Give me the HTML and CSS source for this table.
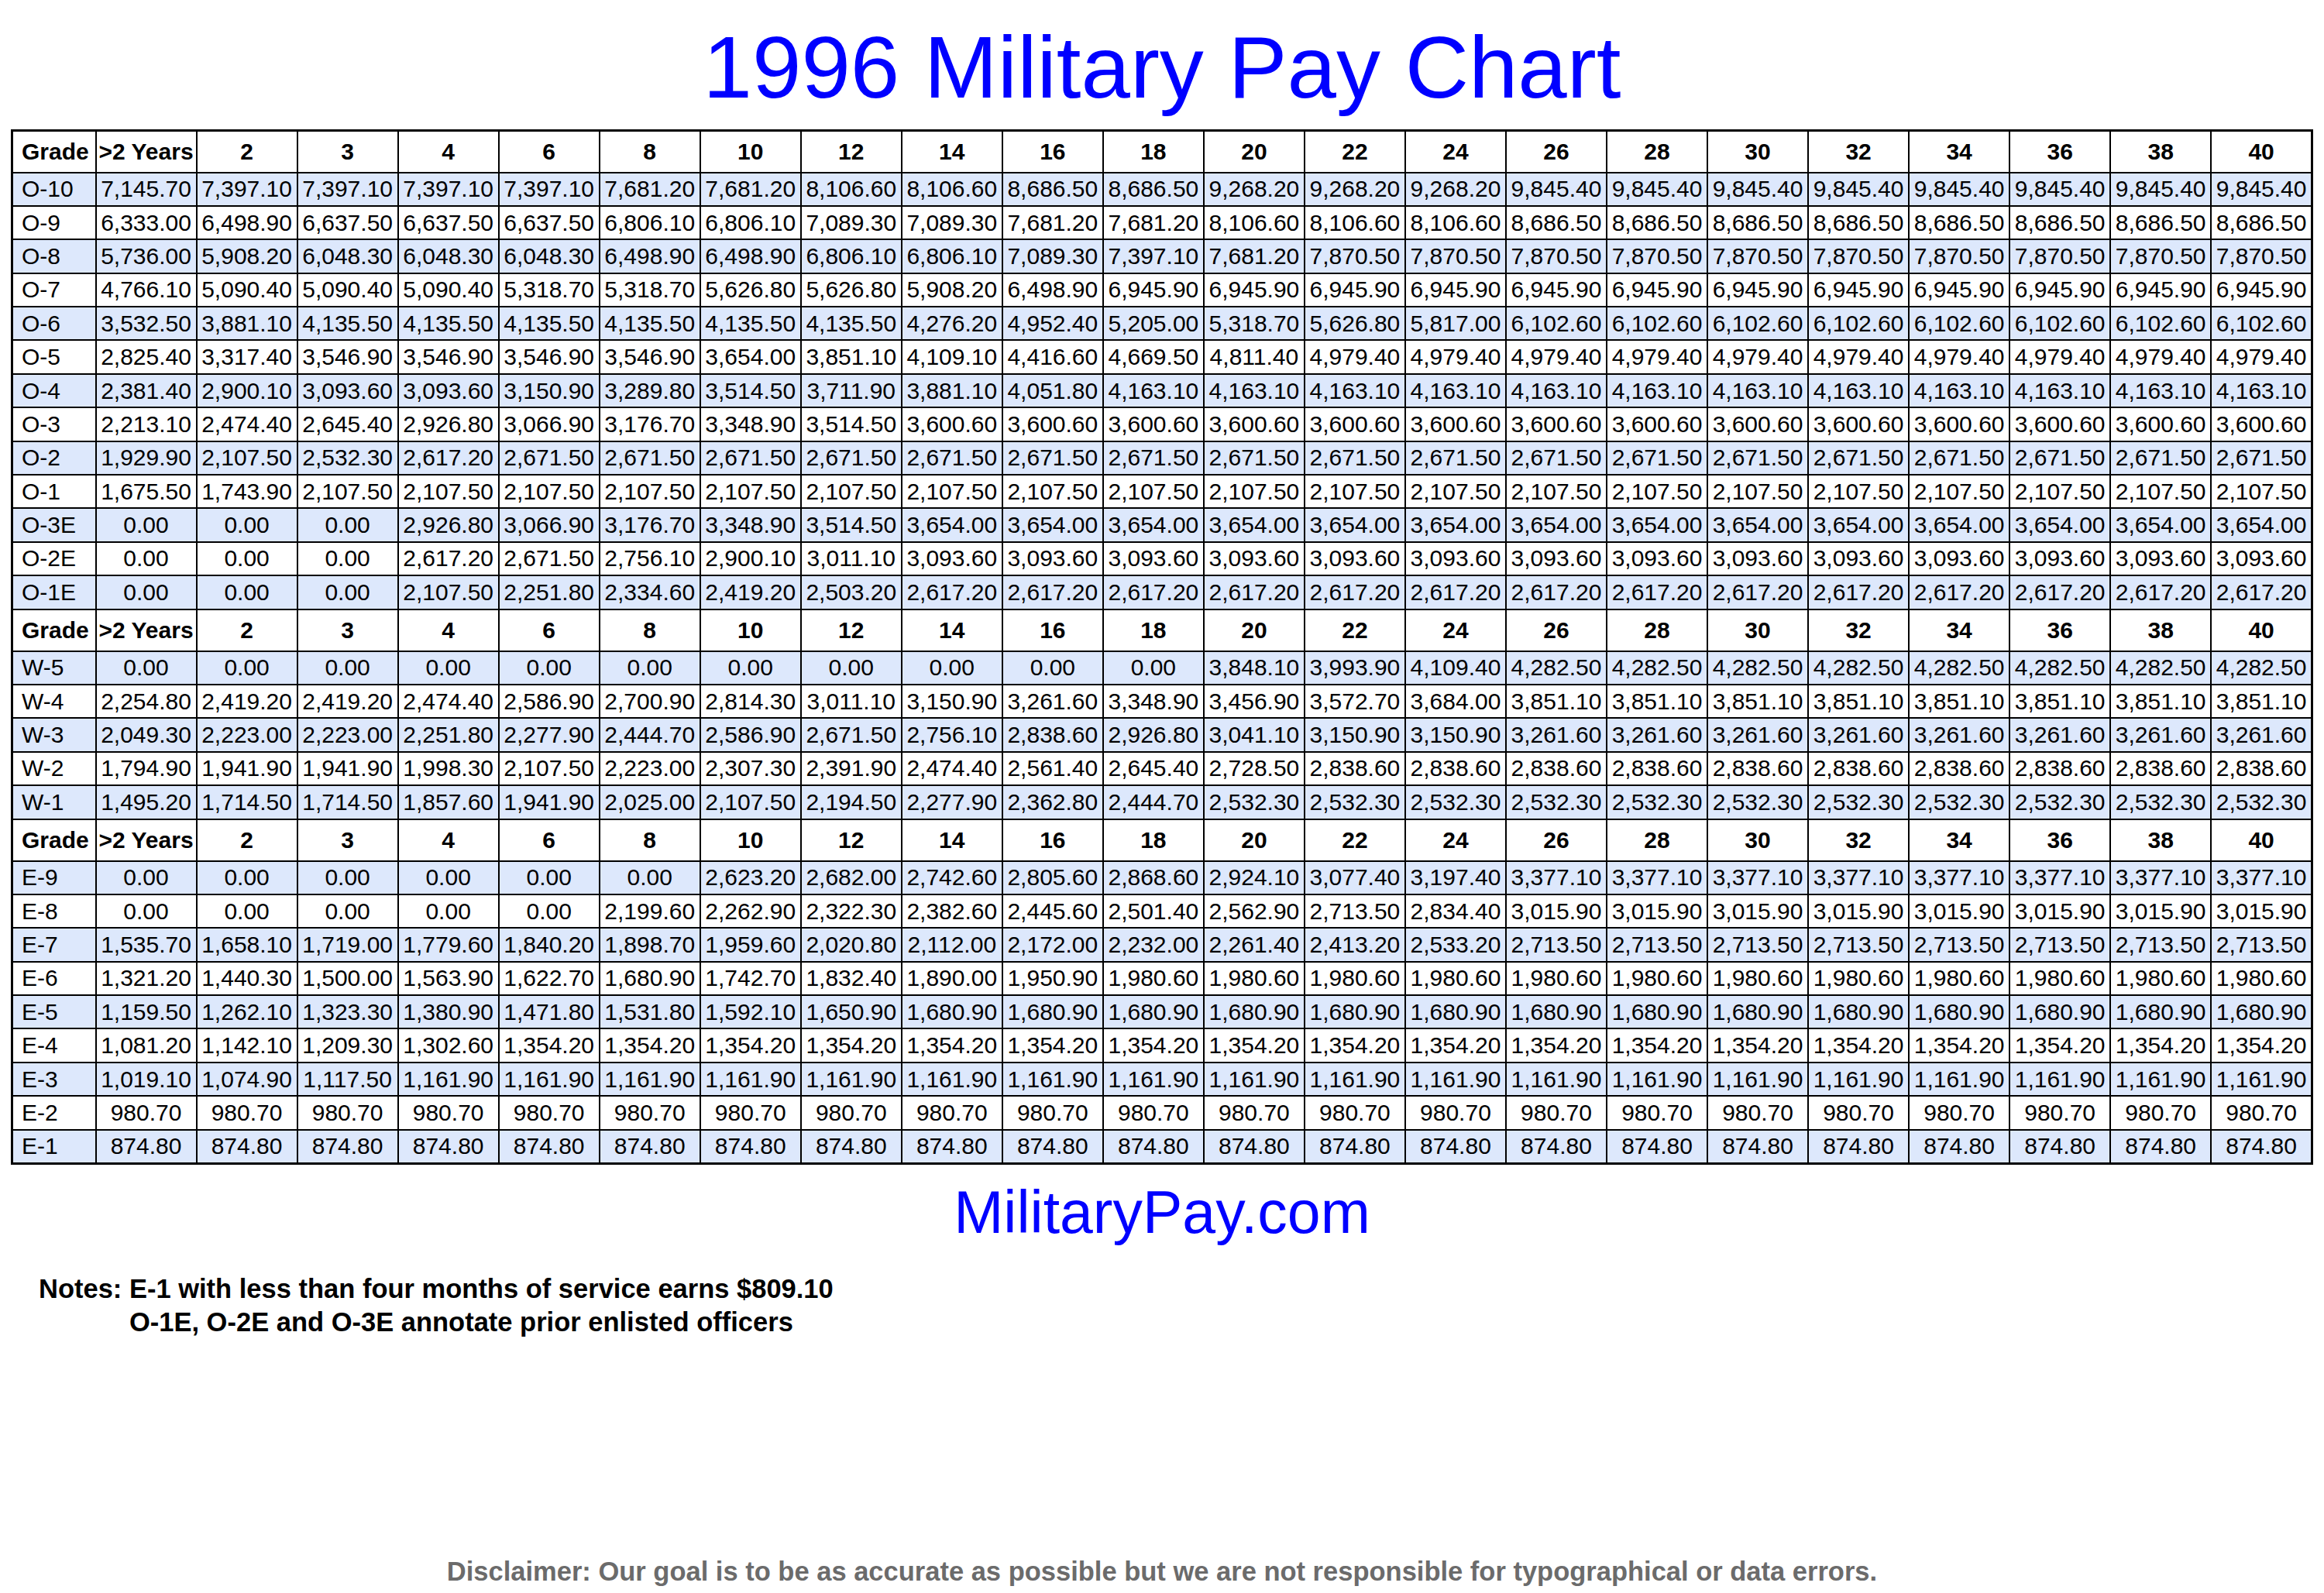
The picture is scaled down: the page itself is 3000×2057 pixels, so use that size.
FILE: index.html
```html
<!DOCTYPE html>
<html lang="en">
<head>
<meta charset="utf-8">
<title>1996 Military Pay Chart</title>
<link rel="stylesheet" href="styles.css">
</head>
<body>
<div class="page">
<h1 class="title">1996 Military Pay Chart</h1>
<table class="pay">
<colgroup><col class="c-grade"><col span="22" class="c-val"></colgroup>
<tbody>
<tr class="head"><th class="g">Grade</th><th>&gt;2 Years</th><th>2</th><th>3</th><th>4</th><th>6</th><th>8</th><th>10</th><th>12</th><th>14</th><th>16</th><th>18</th><th>20</th><th>22</th><th>24</th><th>26</th><th>28</th><th>30</th><th>32</th><th>34</th><th>36</th><th>38</th><th>40</th></tr>
<tr class="b"><td class="g">O-10</td><td>7,145.70</td><td>7,397.10</td><td>7,397.10</td><td>7,397.10</td><td>7,397.10</td><td>7,681.20</td><td>7,681.20</td><td>8,106.60</td><td>8,106.60</td><td>8,686.50</td><td>8,686.50</td><td>9,268.20</td><td>9,268.20</td><td>9,268.20</td><td>9,845.40</td><td>9,845.40</td><td>9,845.40</td><td>9,845.40</td><td>9,845.40</td><td>9,845.40</td><td>9,845.40</td><td>9,845.40</td></tr>
<tr><td class="g">O-9</td><td>6,333.00</td><td>6,498.90</td><td>6,637.50</td><td>6,637.50</td><td>6,637.50</td><td>6,806.10</td><td>6,806.10</td><td>7,089.30</td><td>7,089.30</td><td>7,681.20</td><td>7,681.20</td><td>8,106.60</td><td>8,106.60</td><td>8,106.60</td><td>8,686.50</td><td>8,686.50</td><td>8,686.50</td><td>8,686.50</td><td>8,686.50</td><td>8,686.50</td><td>8,686.50</td><td>8,686.50</td></tr>
<tr class="b"><td class="g">O-8</td><td>5,736.00</td><td>5,908.20</td><td>6,048.30</td><td>6,048.30</td><td>6,048.30</td><td>6,498.90</td><td>6,498.90</td><td>6,806.10</td><td>6,806.10</td><td>7,089.30</td><td>7,397.10</td><td>7,681.20</td><td>7,870.50</td><td>7,870.50</td><td>7,870.50</td><td>7,870.50</td><td>7,870.50</td><td>7,870.50</td><td>7,870.50</td><td>7,870.50</td><td>7,870.50</td><td>7,870.50</td></tr>
<tr><td class="g">O-7</td><td>4,766.10</td><td>5,090.40</td><td>5,090.40</td><td>5,090.40</td><td>5,318.70</td><td>5,318.70</td><td>5,626.80</td><td>5,626.80</td><td>5,908.20</td><td>6,498.90</td><td>6,945.90</td><td>6,945.90</td><td>6,945.90</td><td>6,945.90</td><td>6,945.90</td><td>6,945.90</td><td>6,945.90</td><td>6,945.90</td><td>6,945.90</td><td>6,945.90</td><td>6,945.90</td><td>6,945.90</td></tr>
<tr class="b"><td class="g">O-6</td><td>3,532.50</td><td>3,881.10</td><td>4,135.50</td><td>4,135.50</td><td>4,135.50</td><td>4,135.50</td><td>4,135.50</td><td>4,135.50</td><td>4,276.20</td><td>4,952.40</td><td>5,205.00</td><td>5,318.70</td><td>5,626.80</td><td>5,817.00</td><td>6,102.60</td><td>6,102.60</td><td>6,102.60</td><td>6,102.60</td><td>6,102.60</td><td>6,102.60</td><td>6,102.60</td><td>6,102.60</td></tr>
<tr><td class="g">O-5</td><td>2,825.40</td><td>3,317.40</td><td>3,546.90</td><td>3,546.90</td><td>3,546.90</td><td>3,546.90</td><td>3,654.00</td><td>3,851.10</td><td>4,109.10</td><td>4,416.60</td><td>4,669.50</td><td>4,811.40</td><td>4,979.40</td><td>4,979.40</td><td>4,979.40</td><td>4,979.40</td><td>4,979.40</td><td>4,979.40</td><td>4,979.40</td><td>4,979.40</td><td>4,979.40</td><td>4,979.40</td></tr>
<tr class="b"><td class="g">O-4</td><td>2,381.40</td><td>2,900.10</td><td>3,093.60</td><td>3,093.60</td><td>3,150.90</td><td>3,289.80</td><td>3,514.50</td><td>3,711.90</td><td>3,881.10</td><td>4,051.80</td><td>4,163.10</td><td>4,163.10</td><td>4,163.10</td><td>4,163.10</td><td>4,163.10</td><td>4,163.10</td><td>4,163.10</td><td>4,163.10</td><td>4,163.10</td><td>4,163.10</td><td>4,163.10</td><td>4,163.10</td></tr>
<tr><td class="g">O-3</td><td>2,213.10</td><td>2,474.40</td><td>2,645.40</td><td>2,926.80</td><td>3,066.90</td><td>3,176.70</td><td>3,348.90</td><td>3,514.50</td><td>3,600.60</td><td>3,600.60</td><td>3,600.60</td><td>3,600.60</td><td>3,600.60</td><td>3,600.60</td><td>3,600.60</td><td>3,600.60</td><td>3,600.60</td><td>3,600.60</td><td>3,600.60</td><td>3,600.60</td><td>3,600.60</td><td>3,600.60</td></tr>
<tr class="b"><td class="g">O-2</td><td>1,929.90</td><td>2,107.50</td><td>2,532.30</td><td>2,617.20</td><td>2,671.50</td><td>2,671.50</td><td>2,671.50</td><td>2,671.50</td><td>2,671.50</td><td>2,671.50</td><td>2,671.50</td><td>2,671.50</td><td>2,671.50</td><td>2,671.50</td><td>2,671.50</td><td>2,671.50</td><td>2,671.50</td><td>2,671.50</td><td>2,671.50</td><td>2,671.50</td><td>2,671.50</td><td>2,671.50</td></tr>
<tr><td class="g">O-1</td><td>1,675.50</td><td>1,743.90</td><td>2,107.50</td><td>2,107.50</td><td>2,107.50</td><td>2,107.50</td><td>2,107.50</td><td>2,107.50</td><td>2,107.50</td><td>2,107.50</td><td>2,107.50</td><td>2,107.50</td><td>2,107.50</td><td>2,107.50</td><td>2,107.50</td><td>2,107.50</td><td>2,107.50</td><td>2,107.50</td><td>2,107.50</td><td>2,107.50</td><td>2,107.50</td><td>2,107.50</td></tr>
<tr class="b"><td class="g">O-3E</td><td>0.00</td><td>0.00</td><td>0.00</td><td>2,926.80</td><td>3,066.90</td><td>3,176.70</td><td>3,348.90</td><td>3,514.50</td><td>3,654.00</td><td>3,654.00</td><td>3,654.00</td><td>3,654.00</td><td>3,654.00</td><td>3,654.00</td><td>3,654.00</td><td>3,654.00</td><td>3,654.00</td><td>3,654.00</td><td>3,654.00</td><td>3,654.00</td><td>3,654.00</td><td>3,654.00</td></tr>
<tr><td class="g">O-2E</td><td>0.00</td><td>0.00</td><td>0.00</td><td>2,617.20</td><td>2,671.50</td><td>2,756.10</td><td>2,900.10</td><td>3,011.10</td><td>3,093.60</td><td>3,093.60</td><td>3,093.60</td><td>3,093.60</td><td>3,093.60</td><td>3,093.60</td><td>3,093.60</td><td>3,093.60</td><td>3,093.60</td><td>3,093.60</td><td>3,093.60</td><td>3,093.60</td><td>3,093.60</td><td>3,093.60</td></tr>
<tr class="b"><td class="g">O-1E</td><td>0.00</td><td>0.00</td><td>0.00</td><td>2,107.50</td><td>2,251.80</td><td>2,334.60</td><td>2,419.20</td><td>2,503.20</td><td>2,617.20</td><td>2,617.20</td><td>2,617.20</td><td>2,617.20</td><td>2,617.20</td><td>2,617.20</td><td>2,617.20</td><td>2,617.20</td><td>2,617.20</td><td>2,617.20</td><td>2,617.20</td><td>2,617.20</td><td>2,617.20</td><td>2,617.20</td></tr>
<tr class="head"><th class="g">Grade</th><th>&gt;2 Years</th><th>2</th><th>3</th><th>4</th><th>6</th><th>8</th><th>10</th><th>12</th><th>14</th><th>16</th><th>18</th><th>20</th><th>22</th><th>24</th><th>26</th><th>28</th><th>30</th><th>32</th><th>34</th><th>36</th><th>38</th><th>40</th></tr>
<tr class="b"><td class="g">W-5</td><td>0.00</td><td>0.00</td><td>0.00</td><td>0.00</td><td>0.00</td><td>0.00</td><td>0.00</td><td>0.00</td><td>0.00</td><td>0.00</td><td>0.00</td><td>3,848.10</td><td>3,993.90</td><td>4,109.40</td><td>4,282.50</td><td>4,282.50</td><td>4,282.50</td><td>4,282.50</td><td>4,282.50</td><td>4,282.50</td><td>4,282.50</td><td>4,282.50</td></tr>
<tr><td class="g">W-4</td><td>2,254.80</td><td>2,419.20</td><td>2,419.20</td><td>2,474.40</td><td>2,586.90</td><td>2,700.90</td><td>2,814.30</td><td>3,011.10</td><td>3,150.90</td><td>3,261.60</td><td>3,348.90</td><td>3,456.90</td><td>3,572.70</td><td>3,684.00</td><td>3,851.10</td><td>3,851.10</td><td>3,851.10</td><td>3,851.10</td><td>3,851.10</td><td>3,851.10</td><td>3,851.10</td><td>3,851.10</td></tr>
<tr class="b"><td class="g">W-3</td><td>2,049.30</td><td>2,223.00</td><td>2,223.00</td><td>2,251.80</td><td>2,277.90</td><td>2,444.70</td><td>2,586.90</td><td>2,671.50</td><td>2,756.10</td><td>2,838.60</td><td>2,926.80</td><td>3,041.10</td><td>3,150.90</td><td>3,150.90</td><td>3,261.60</td><td>3,261.60</td><td>3,261.60</td><td>3,261.60</td><td>3,261.60</td><td>3,261.60</td><td>3,261.60</td><td>3,261.60</td></tr>
<tr><td class="g">W-2</td><td>1,794.90</td><td>1,941.90</td><td>1,941.90</td><td>1,998.30</td><td>2,107.50</td><td>2,223.00</td><td>2,307.30</td><td>2,391.90</td><td>2,474.40</td><td>2,561.40</td><td>2,645.40</td><td>2,728.50</td><td>2,838.60</td><td>2,838.60</td><td>2,838.60</td><td>2,838.60</td><td>2,838.60</td><td>2,838.60</td><td>2,838.60</td><td>2,838.60</td><td>2,838.60</td><td>2,838.60</td></tr>
<tr class="b"><td class="g">W-1</td><td>1,495.20</td><td>1,714.50</td><td>1,714.50</td><td>1,857.60</td><td>1,941.90</td><td>2,025.00</td><td>2,107.50</td><td>2,194.50</td><td>2,277.90</td><td>2,362.80</td><td>2,444.70</td><td>2,532.30</td><td>2,532.30</td><td>2,532.30</td><td>2,532.30</td><td>2,532.30</td><td>2,532.30</td><td>2,532.30</td><td>2,532.30</td><td>2,532.30</td><td>2,532.30</td><td>2,532.30</td></tr>
<tr class="head"><th class="g">Grade</th><th>&gt;2 Years</th><th>2</th><th>3</th><th>4</th><th>6</th><th>8</th><th>10</th><th>12</th><th>14</th><th>16</th><th>18</th><th>20</th><th>22</th><th>24</th><th>26</th><th>28</th><th>30</th><th>32</th><th>34</th><th>36</th><th>38</th><th>40</th></tr>
<tr class="b"><td class="g">E-9</td><td>0.00</td><td>0.00</td><td>0.00</td><td>0.00</td><td>0.00</td><td>0.00</td><td>2,623.20</td><td>2,682.00</td><td>2,742.60</td><td>2,805.60</td><td>2,868.60</td><td>2,924.10</td><td>3,077.40</td><td>3,197.40</td><td>3,377.10</td><td>3,377.10</td><td>3,377.10</td><td>3,377.10</td><td>3,377.10</td><td>3,377.10</td><td>3,377.10</td><td>3,377.10</td></tr>
<tr><td class="g">E-8</td><td>0.00</td><td>0.00</td><td>0.00</td><td>0.00</td><td>0.00</td><td>2,199.60</td><td>2,262.90</td><td>2,322.30</td><td>2,382.60</td><td>2,445.60</td><td>2,501.40</td><td>2,562.90</td><td>2,713.50</td><td>2,834.40</td><td>3,015.90</td><td>3,015.90</td><td>3,015.90</td><td>3,015.90</td><td>3,015.90</td><td>3,015.90</td><td>3,015.90</td><td>3,015.90</td></tr>
<tr class="b"><td class="g">E-7</td><td>1,535.70</td><td>1,658.10</td><td>1,719.00</td><td>1,779.60</td><td>1,840.20</td><td>1,898.70</td><td>1,959.60</td><td>2,020.80</td><td>2,112.00</td><td>2,172.00</td><td>2,232.00</td><td>2,261.40</td><td>2,413.20</td><td>2,533.20</td><td>2,713.50</td><td>2,713.50</td><td>2,713.50</td><td>2,713.50</td><td>2,713.50</td><td>2,713.50</td><td>2,713.50</td><td>2,713.50</td></tr>
<tr><td class="g">E-6</td><td>1,321.20</td><td>1,440.30</td><td>1,500.00</td><td>1,563.90</td><td>1,622.70</td><td>1,680.90</td><td>1,742.70</td><td>1,832.40</td><td>1,890.00</td><td>1,950.90</td><td>1,980.60</td><td>1,980.60</td><td>1,980.60</td><td>1,980.60</td><td>1,980.60</td><td>1,980.60</td><td>1,980.60</td><td>1,980.60</td><td>1,980.60</td><td>1,980.60</td><td>1,980.60</td><td>1,980.60</td></tr>
<tr class="b"><td class="g">E-5</td><td>1,159.50</td><td>1,262.10</td><td>1,323.30</td><td>1,380.90</td><td>1,471.80</td><td>1,531.80</td><td>1,592.10</td><td>1,650.90</td><td>1,680.90</td><td>1,680.90</td><td>1,680.90</td><td>1,680.90</td><td>1,680.90</td><td>1,680.90</td><td>1,680.90</td><td>1,680.90</td><td>1,680.90</td><td>1,680.90</td><td>1,680.90</td><td>1,680.90</td><td>1,680.90</td><td>1,680.90</td></tr>
<tr><td class="g">E-4</td><td>1,081.20</td><td>1,142.10</td><td>1,209.30</td><td>1,302.60</td><td>1,354.20</td><td>1,354.20</td><td>1,354.20</td><td>1,354.20</td><td>1,354.20</td><td>1,354.20</td><td>1,354.20</td><td>1,354.20</td><td>1,354.20</td><td>1,354.20</td><td>1,354.20</td><td>1,354.20</td><td>1,354.20</td><td>1,354.20</td><td>1,354.20</td><td>1,354.20</td><td>1,354.20</td><td>1,354.20</td></tr>
<tr class="b"><td class="g">E-3</td><td>1,019.10</td><td>1,074.90</td><td>1,117.50</td><td>1,161.90</td><td>1,161.90</td><td>1,161.90</td><td>1,161.90</td><td>1,161.90</td><td>1,161.90</td><td>1,161.90</td><td>1,161.90</td><td>1,161.90</td><td>1,161.90</td><td>1,161.90</td><td>1,161.90</td><td>1,161.90</td><td>1,161.90</td><td>1,161.90</td><td>1,161.90</td><td>1,161.90</td><td>1,161.90</td><td>1,161.90</td></tr>
<tr><td class="g">E-2</td><td>980.70</td><td>980.70</td><td>980.70</td><td>980.70</td><td>980.70</td><td>980.70</td><td>980.70</td><td>980.70</td><td>980.70</td><td>980.70</td><td>980.70</td><td>980.70</td><td>980.70</td><td>980.70</td><td>980.70</td><td>980.70</td><td>980.70</td><td>980.70</td><td>980.70</td><td>980.70</td><td>980.70</td><td>980.70</td></tr>
<tr class="b"><td class="g">E-1</td><td>874.80</td><td>874.80</td><td>874.80</td><td>874.80</td><td>874.80</td><td>874.80</td><td>874.80</td><td>874.80</td><td>874.80</td><td>874.80</td><td>874.80</td><td>874.80</td><td>874.80</td><td>874.80</td><td>874.80</td><td>874.80</td><td>874.80</td><td>874.80</td><td>874.80</td><td>874.80</td><td>874.80</td><td>874.80</td></tr>
</tbody>
</table>
<p class="site">MilitaryPay.com</p>
<div class="notes">
<span class="notes-label">Notes:</span>
<div class="notes-lines">
<div>E-1 with less than four months of service earns $809.10</div>
<div>O-1E, O-2E and O-3E annotate prior enlisted officers</div>
</div>
</div>
<p class="disclaimer">Disclaimer: Our goal is to be as accurate as possible but we are not responsible for typographical or data errors.</p>
</div>
</body>
</html>
```
FILE: styles.css
```css
html, body {
  margin: 0;
  padding: 0;
  background: #ffffff;
}

.page {
  box-sizing: border-box;
  width: 3000px;
  min-height: 2057px;
  padding: 0 14px 11px;
  display: flex;
  flex-direction: column;
  font-family: "Liberation Sans", Arial, sans-serif;
  color: #000000;
}

.title {
  margin: 0;
  padding-top: 30px;
  font-size: 114px;
  line-height: 114px;
  font-weight: normal;
  color: #0000ff;
  text-align: center;
}

.pay {
  margin-top: 23px;
  width: 2972px;
  border-collapse: collapse;
  table-layout: fixed;
  border: 3px solid #000000;
  font-size: 30px;
}

.c-grade { width: 108px; }
.c-val { width: 130px; }

.pay th,
.pay td {
  border: 2px solid #000000;
  padding: 0;
  text-align: center;
  vertical-align: middle;
  white-space: nowrap;
  overflow: hidden;
  line-height: 1;
}

.pay th { font-weight: bold; }

.pay .g {
  text-align: left;
  padding-left: 11px;
}

.pay tr { height: 43.4px; }
.pay tr.head { height: 54px; }
.pay tr.b { background: #dde8fc; }

.site {
  margin: 23px 0 0;
  font-size: 77px;
  line-height: 77px;
  color: #0000ff;
  text-align: center;
}

.notes {
  margin-top: 39px;
  margin-left: 36px;
  display: flex;
  column-gap: 0.278em;
  font-size: 34.5px;
  line-height: 43px;
  font-weight: bold;
}

.disclaimer {
  margin: auto 0 0;
  font-size: 34.5px;
  line-height: 34px;
  font-weight: bold;
  color: #6b6b6b;
  text-align: center;
}
```
